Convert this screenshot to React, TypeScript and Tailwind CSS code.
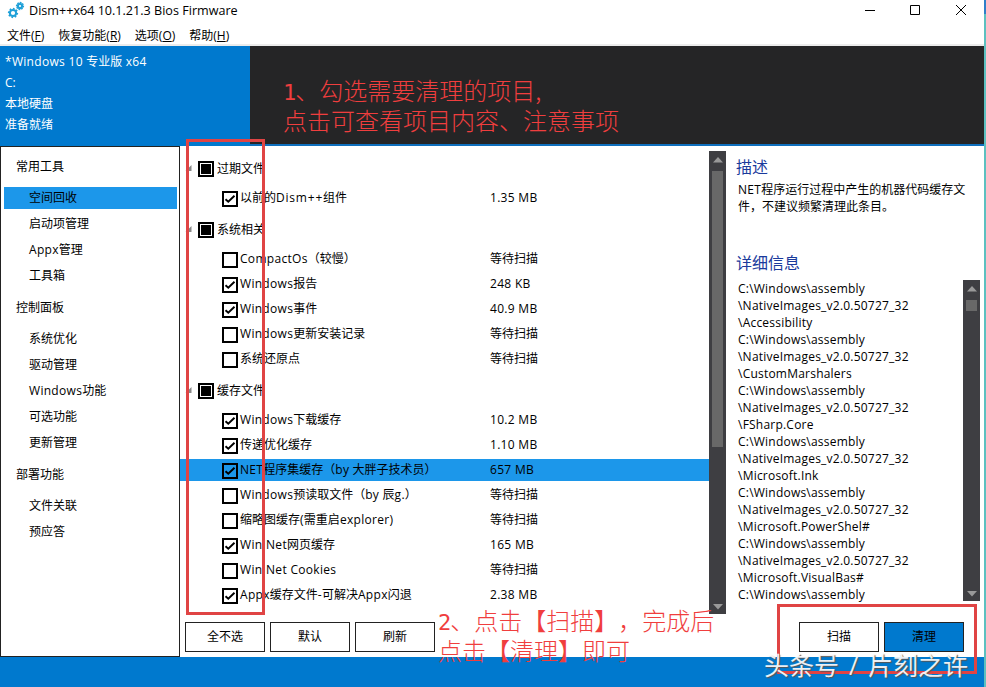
import React from "react";

type CheckState = "on" | "off" | "mixed";

interface CleanItem {
  name: string;
  size: string;
  state: CheckState;
  selected?: boolean;
}

interface CleanGroup {
  title: string;
  items: CleanItem[];
}

const navGroups = [
  { title: "常用工具", items: ["空间回收", "启动项管理", "Appx管理", "工具箱"] },
  { title: "控制面板", items: ["系统优化", "驱动管理", "Windows功能", "可选功能", "更新管理"] },
  { title: "部署功能", items: ["文件关联", "预应答"] },
];

const cleanGroups: CleanGroup[] = [
  {
    title: "过期文件",
    items: [{ name: "以前的Dism++组件", size: "1.35 MB", state: "on" }],
  },
  {
    title: "系统相关",
    items: [
      { name: "CompactOs（较慢）", size: "等待扫描", state: "off" },
      { name: "Windows报告", size: "248 KB", state: "on" },
      { name: "Windows事件", size: "40.9 MB", state: "on" },
      { name: "Windows更新安装记录", size: "等待扫描", state: "off" },
      { name: "系统还原点", size: "等待扫描", state: "off" },
    ],
  },
  {
    title: "缓存文件",
    items: [
      { name: "Windows下载缓存", size: "10.2 MB", state: "on" },
      { name: "传递优化缓存", size: "1.10 MB", state: "on" },
      { name: "NET程序集缓存（by 大胖子技术员）", size: "657 MB", state: "on", selected: true },
      { name: "Windows预读取文件（by 辰g.）", size: "等待扫描", state: "off" },
      { name: "缩略图缓存(需重启explorer)", size: "等待扫描", state: "off" },
      { name: "WinINet网页缓存", size: "165 MB", state: "on" },
      { name: "WinINet Cookies", size: "等待扫描", state: "off" },
      { name: "Appx缓存文件-可解决Appx闪退", size: "2.38 MB", state: "on" },
    ],
  },
];

const assemblies = [
  "Accessibility",
  "CustomMarshalers",
  "FSharp.Core",
  "Microsoft.Ink",
  "Microsoft.PowerShel#",
  "Microsoft.VisualBas#",
];

const menus = [
  { label: "文件", hotkey: "F" },
  { label: "恢复功能", hotkey: "R" },
  { label: "选项", hotkey: "O" },
  { label: "帮助", hotkey: "H" },
];

// Latin runs get a little tracking, CJK runs keep their square grid
const Label = ({ text }: { text: string }) => (
  <>
    {text.split(/([\x20-\x7e]+)/).map((run, i) =>
      i % 2 ? (
        <span key={i} className={run.includes("++") ? "tracking-[0.8px]" : "tracking-[0.3px]"}>
          {run}
        </span>
      ) : (
        run
      )
    )}
  </>
);

const Gear = ({ cx, cy, r }: { cx: number; cy: number; r: number }) => (
  <g transform={`translate(${cx} ${cy})`} stroke="#1fa0d8" fill="none">
    <circle r={r} strokeWidth="2" />
    {[0, 45, 90, 135, 180, 225, 270, 315].map((a) => (
      <path key={a} d={`M0 ${-r - 0.5}V${-r - 2}`} strokeWidth="1.8" transform={`rotate(${a + 10})`} />
    ))}
  </g>
);

const Check = ({ state }: { state: CheckState }) => (
  <span className="flex h-4 w-4 shrink-0 items-center justify-center border-2 border-black">
    {state === "mixed" && <span className="h-2.5 w-2.5 bg-black" />}
    {state === "on" && (
      <svg width="12" height="12" viewBox="0 0 12 12" fill="none" stroke="#000" strokeWidth="1.9">
        <path d="M1.5 6.2 4.3 8.8 10.5 2.8" />
      </svg>
    )}
  </span>
);

const ScrollBar = ({ className, thumb }: { className: string; thumb: string }) => (
  <div className={`flex w-[17px] flex-col items-center justify-between bg-[#3e3e42] ${className}`}>
    <div className="flex flex-col items-center">
      <svg className="h-5" width="10" height="20" viewBox="0 0 10 20">
        <path d="M0 11.5 5 6l5 5.5z" fill="#999" />
      </svg>
      <div className={`w-[11px] bg-[#686868] ${thumb}`} />
    </div>
    <svg width="10" height="14" viewBox="0 0 10 14">
      <path d="M0 4 5 9.5 10 4z" fill="#999" />
    </svg>
  </div>
);

const Button = ({ label, primary }: { label: string; primary?: boolean }) => (
  <button
    className={`h-[30px] w-20 border border-[#222] pb-0.5 text-center ${primary ? "bg-[#0079ce]" : "bg-white"}`}
  >
    {label}
  </button>
);

export default function App() {
  return (
    <div className="relative flex h-[687px] w-[986px] overflow-hidden bg-white font-['Open_Sans','Noto_Sans_CJK_SC',sans-serif] text-[12px] leading-[17px] whitespace-nowrap text-black [text-spacing-trim:space-all]">
      <div className="flex w-[984px] flex-col">
        {/* Title bar */}
        <div className="flex h-[22px] items-center pb-0.5 pl-1.5">
          <svg width="20" height="20" viewBox="0 0 20 20">
            <Gear cx={7} cy={13} r={3.1} />
            <Gear cx={14} cy={6} r={2.1} />
          </svg>
          <span className="ml-[3px] text-[12.6px]">Dism++x64 10.1.21.3 Bios Firmware</span>
          <svg className="ml-auto mr-[17px]" width="102" height="12" viewBox="0 0 102 12" fill="none" stroke="#000">
            <path d="M0 6.5h10M45.5 1.5h9v9h-9zM91 1l10 10M101 1 91 11" />
          </svg>
        </div>

        {/* Menu */}
        <div className="flex h-6 gap-[14px] border-b-2 border-[#ececec] pl-[7px] pt-[5px]">
          {menus.map((m) => (
            <span key={m.hotkey} className="leading-[18px]">
              {m.label}(<u>{m.hotkey}</u>)
            </span>
          ))}
        </div>

        {/* System info */}
        <div className="flex h-[100px] border-b-2 border-[#0f6fbd] bg-[#252526]">
          <div className="h-[100px] w-[250px] bg-[#0079ce] pl-[5px] pt-[5px] leading-[21px] text-white">
            <p>
              <Label text="*Windows 10 专业版 x64" />
            </p>
            <p>C:</p>
            <p>本地硬盘</p>
            <p>准备就绪</p>
          </div>
        </div>

        <div className="flex h-[511px]">
          {/* Navigation */}
          <nav className="w-[180px] border border-[#222] pl-[3px]">
            {navGroups.map((g, i) => (
              <div key={g.title} className="pb-px">
                <h3 className={`flex items-center pl-3 ${i === 0 ? "h-10 pb-0.5" : "h-9 pb-1.5"}`}>{g.title}</h3>
                {g.items.map((item) => (
                  <div
                    key={item}
                    className={`mb-1 h-[22px] w-[173px] pl-[25px] pt-0.5 ${item === "空间回收" ? "bg-[#1c97ea]" : ""}`}
                  >
                    <Label text={item} />
                  </div>
                ))}
              </div>
            ))}
          </nav>

          {/* Clean list */}
          <main className="flex w-[529px] flex-col">
            <div className="h-[468px] pt-[5px]">
              {cleanGroups.map((g) => (
                <section key={g.title}>
                  <h3 className="flex h-9 items-center pb-0.5 pl-1">
                    <svg width="8" height="8" viewBox="0 0 8 8">
                      <path d="M7.5 1v6h-6z" fill="#888" />
                    </svg>
                    <span className="ml-1.5 mr-[3px] mt-px">
                      <Check state="mixed" />
                    </span>
                    {g.title}
                  </h3>
                  {g.items.map((item) => (
                    <div
                      key={item.name}
                      className={`mb-[3px] flex h-[22px] items-center pb-0.5 pl-[42px] ${item.selected ? "bg-[#1c97ea]" : ""}`}
                    >
                      <span className="mr-0.5 mt-1">
                        <Check state={item.state} />
                      </span>
                      <span className="w-[250px]">
                        <Label text={item.name} />
                      </span>
                      <span>
                        <Label text={item.size} />
                      </span>
                    </div>
                  ))}
                </section>
              ))}
            </div>
            <div className="flex gap-[5px] pl-[5px] pt-2">
              <Button label="全不选" />
              <Button label="默认" />
              <Button label="刷新" />
            </div>
          </main>

          <ScrollBar className="mt-[5px] h-[463px]" thumb="h-[276px]" />

          {/* Details */}
          <aside className="flex w-[258px] flex-col pl-2.5">
            <h2 className="mt-2 h-[27px] text-[16px] leading-[26px] text-[#1a3a9c]">描述</h2>
            <p className="h-[68px] pl-0.5">
              <Label text="NET程序运行过程中产生的机器代码缓存文" />
              <br />
              件，不建议频繁清理此条目。
            </p>
            <h2 className="h-[31px] pt-px text-[16px] leading-[26px] text-[#1a3a9c]">详细信息</h2>
            <div className="flex h-[321px]">
              <div className="w-[227px] pl-0.5 leading-[17px] tracking-[0.22px]">
                {assemblies.map((a) => (
                  <React.Fragment key={a}>
                    <p>C:\Windows\assembly</p>
                    <p>\NativeImages_v2.0.50727_32</p>
                    <p>\{a}</p>
                  </React.Fragment>
                ))}
                <p>C:\Windows\assembly</p>
              </div>
              <ScrollBar className="h-[321px]" thumb="h-[11px]" />
            </div>
            <div className="flex gap-[5px] pl-[63px] pt-[21px]">
              <Button label="扫描" />
              <Button label="清理" primary />
            </div>
          </aside>
        </div>

        <footer className="h-[30px] bg-[#0079ce]" />
      </div>

      {/* Strip of the desktop behind the window */}
      <div className="flex w-0.5 flex-col">
        <div className="h-3.5 bg-[#2f7fc9]" />
        <div className="grow bg-[#5cc0c0]" />
      </div>

      {/* Annotations */}
      <div className="absolute left-[186px] top-[139px] h-[476px] w-[79px] border-3 border-[#e04444]" />
      <div className="absolute left-[777px] top-[604px] h-[70px] w-[200px] border-3 border-[#e04444]" />
      <div className="absolute left-[283px] top-[75px] font-['Noto_Sans_CJK_SC',sans-serif] text-[24px] leading-[30px] font-light text-[#f03e3e]">
        <p className="h-[30px]">
          <span className="font-['DejaVu_Sans_Mono',monospace] text-[22px] leading-none tracking-[-1px]">1</span>
          、勾选需要清理的项目,
        </p>
        <p className="h-[30px]">点击可查看项目内容、注意事项</p>
      </div>
      <div className="absolute left-[438px] top-[605px] font-['Noto_Sans_CJK_SC',sans-serif] text-[24px] leading-[30px] font-light text-[#f03e3e]">
        <p className="h-[30px]">
          <span className="font-['DejaVu_Sans_Mono',monospace] text-[22px] leading-none tracking-[-1px]">2</span>
          、点击【扫描】，完成后
        </p>
        <p className="h-[30px]">点击【清理】即可</p>
      </div>
      <div className="absolute left-[764px] top-[649px] flex font-['Open_Sans','Noto_Sans_CJK_SC',sans-serif] text-[25px] leading-[32px] text-white/90 [text-shadow:1px_1px_1px_#555]">
        头条号<span className="w-[29px] text-center">/</span>片刻之许
      </div>
    </div>
  );
}
